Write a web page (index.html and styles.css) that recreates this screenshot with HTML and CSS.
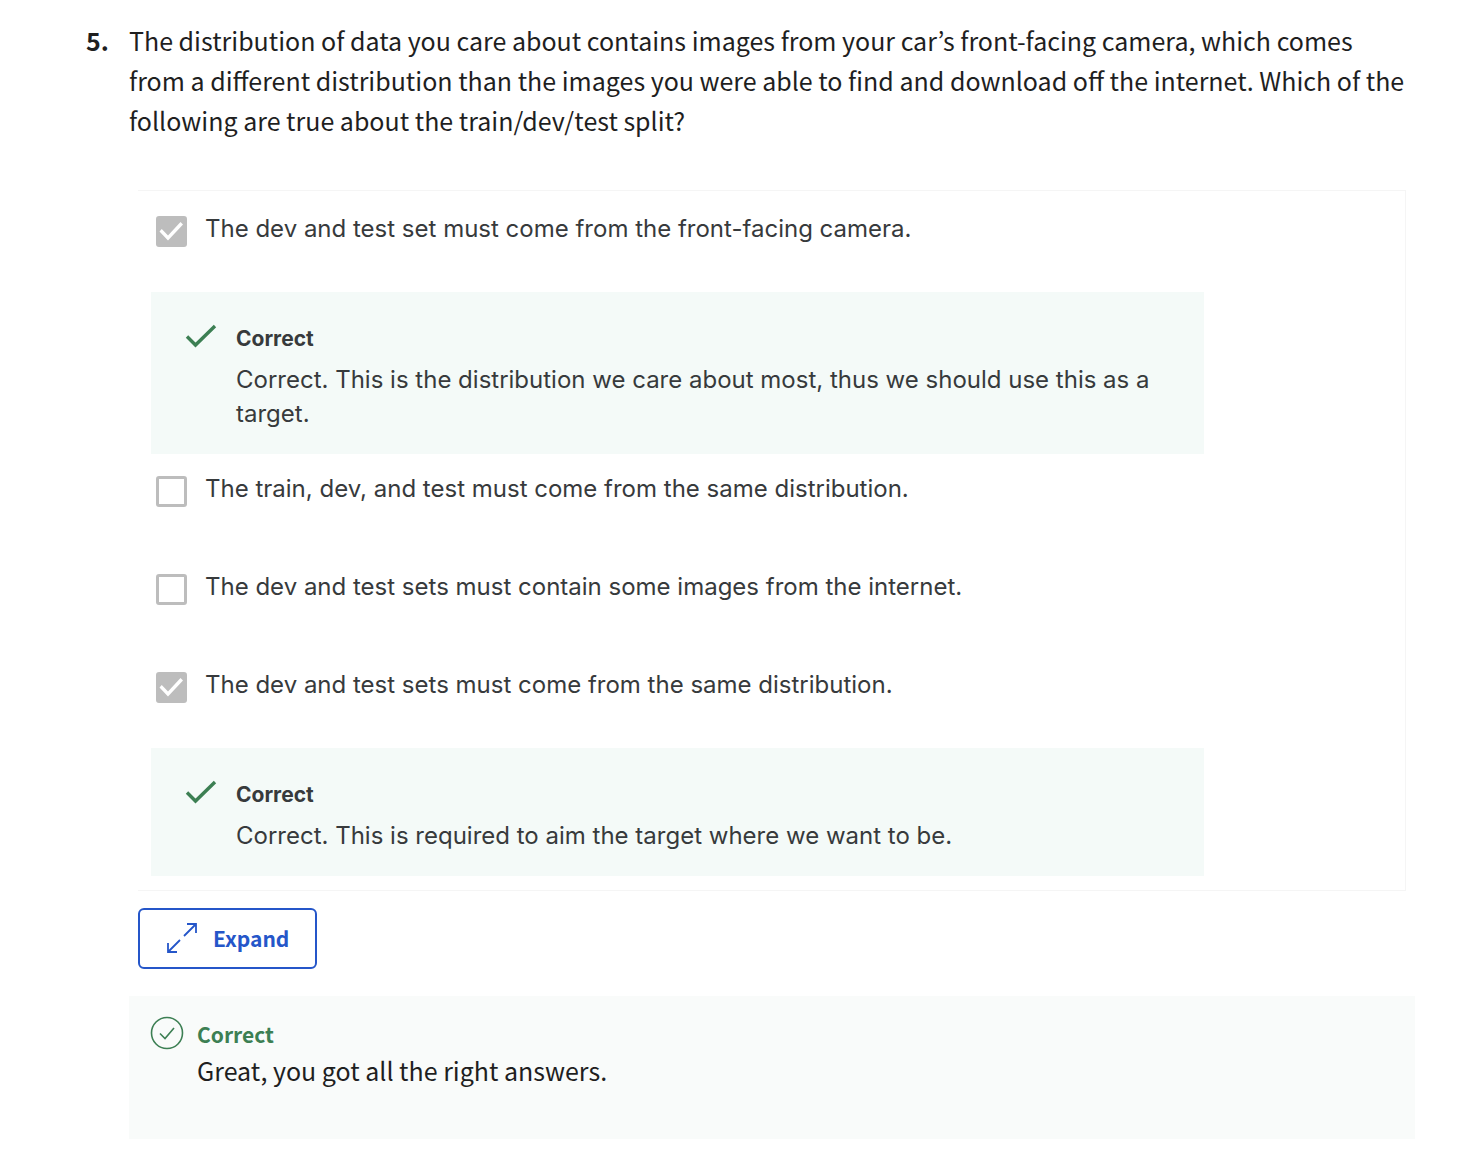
FILE: index.html
```html
<!DOCTYPE html>
<html lang="en">
<head>
<meta charset="utf-8">
<meta name="viewport" content="width=device-width, initial-scale=1">
<title>Quiz: question 5</title>
<link rel="stylesheet" href="styles.css">
</head>
<body>
<main class="question">
  <span class="question-number">5.</span>
  <div class="question-body">
    <p class="prompt" id="prompt">The distribution of data you care about contains images from your car’s front-facing camera, which comes from a different distribution than the images you were able to find and download off the internet. Which of the following are true about the train/dev/test split?</p>

    <div class="answers" role="group" aria-labelledby="prompt">
      <label class="option"><input class="box" type="checkbox" checked disabled><span>The dev and test set must come from the front-facing camera.</span></label>
      <section class="feedback">
        <svg class="tick" viewBox="0 0 32 24" aria-hidden="true"><path d="M2 12.5 10.5 21 30 2"/></svg>
        <div>
          <h2 class="feedback-title">Correct</h2>
          <p class="feedback-text">Correct. This is the distribution we care about most, thus we should use this as a target.</p>
        </div>
      </section>
      <label class="option"><input class="box" type="checkbox" disabled><span>The train, dev, and test must come from the same distribution.</span></label>
      <label class="option"><input class="box" type="checkbox" disabled><span>The dev and test sets must contain some images from the internet.</span></label>
      <label class="option"><input class="box" type="checkbox" checked disabled><span>The dev and test sets must come from the same distribution.</span></label>
      <section class="feedback">
        <svg class="tick" viewBox="0 0 32 24" aria-hidden="true"><path d="M2 12.5 10.5 21 30 2"/></svg>
        <div>
          <h2 class="feedback-title">Correct</h2>
          <p class="feedback-text">Correct. This is required to aim the target where we want to be.</p>
        </div>
      </section>
    </div>

    <button class="expand" type="button">
      <svg class="expand-icon" viewBox="0 0 32 32" aria-hidden="true"><path d="M18 13 30 1M21 1h9v9M14 17 2 29M2 20v9h9"/></svg>
      <span>Expand</span>
    </button>

    <section class="result">
      <svg class="result-icon" viewBox="0 0 34 34" aria-hidden="true"><circle cx="17" cy="17" r="15.5"/><path d="M10 17.500l5 5L24 12"/></svg>
      <div>
        <h2 class="result-title">Correct</h2>
        <p class="result-text">Great, you got all the right answers.</p>
      </div>
    </section>
  </div>
</main>
</body>
</html>
```
FILE: styles.css
```css
* { box-sizing: border-box; }

body {
  margin: 0;
  background: #fff;
  color: #1f1f1f;
  font-family: "Noto Sans CJK KR", sans-serif;
  font-size: 25px;
  line-height: 40px;
}

h2, p { margin: 0; }

.question {
  display: grid;
  grid-template-columns: 43px minmax(0, 1fr);
  padding: 20px 67px 23px 86px;
}

.question-number { font-weight: 700; }

.prompt {
  margin-bottom: 50px;
  padding-right: 6px;
}

.answers {
  margin: 0 9px 17px;
  padding: 3px 13px 14px;
  border: 1px solid #f5f5f5;
  border-left: 0;
  color: #373a3c;
  font-family: Inter, sans-serif;
  font-size: 24px;
  line-height: 34px;
}

.option {
  display: flex;
  gap: 18px;
  min-height: 98px;
  padding: 18px 5px;
}

.box {
  appearance: none;
  flex: none;
  width: 31px;
  height: 31px;
  margin: 4px 0 0;
  border: 3px solid #bdbdbd;
  border-radius: 3px;
}

.box:checked { background: #bdbdbd; }

.box:checked::before {
  content: "";
  display: block;
  height: 100%;
  background: #fff;
  clip-path: polygon(2% 50%, 11% 40%, 36% 66%, 86% 12%, 96% 22%, 36% 86%);
}

.feedback {
  display: flex;
  gap: 19px;
  max-width: 1053px;
  padding: 35px 24px 23px 34px;
  background: #f4faf8;
}

.tick {
  flex: none;
  width: 32px;
  height: 24px;
  margin-top: -3px;
  fill: none;
  stroke: #3c7f53;
  stroke-width: 3.4;
}

.feedback-title {
  margin-bottom: 12px;
  font-size: 21px;
  font-weight: 700;
  line-height: 24px;
}

.expand {
  display: flex;
  align-items: center;
  gap: 15px;
  margin: 0 9px 27px;
  padding: 9px 26px;
  border: 2px solid #2556c9;
  border-radius: 6px;
  background: #fff;
  color: #2556c9;
  font: inherit;
  font-size: 21px;
  font-weight: 700;
  line-height: 39px;
}

.expand-icon {
  width: 32px;
  height: 32px;
  fill: none;
  stroke: currentColor;
  stroke-width: 1.8;
}

.result {
  display: flex;
  gap: 13px;
  min-height: 143px;
  padding: 20px 21px;
  background: #f9fbfa;
}

.result-icon {
  flex: none;
  width: 34px;
  height: 34px;
  fill: none;
  stroke: #3c7f53;
  stroke-width: 1.6;
}

.result-title {
  color: #3c7f53;
  font-size: 21px;
  line-height: 36px;
}

.result-text { line-height: 36px; }
```
